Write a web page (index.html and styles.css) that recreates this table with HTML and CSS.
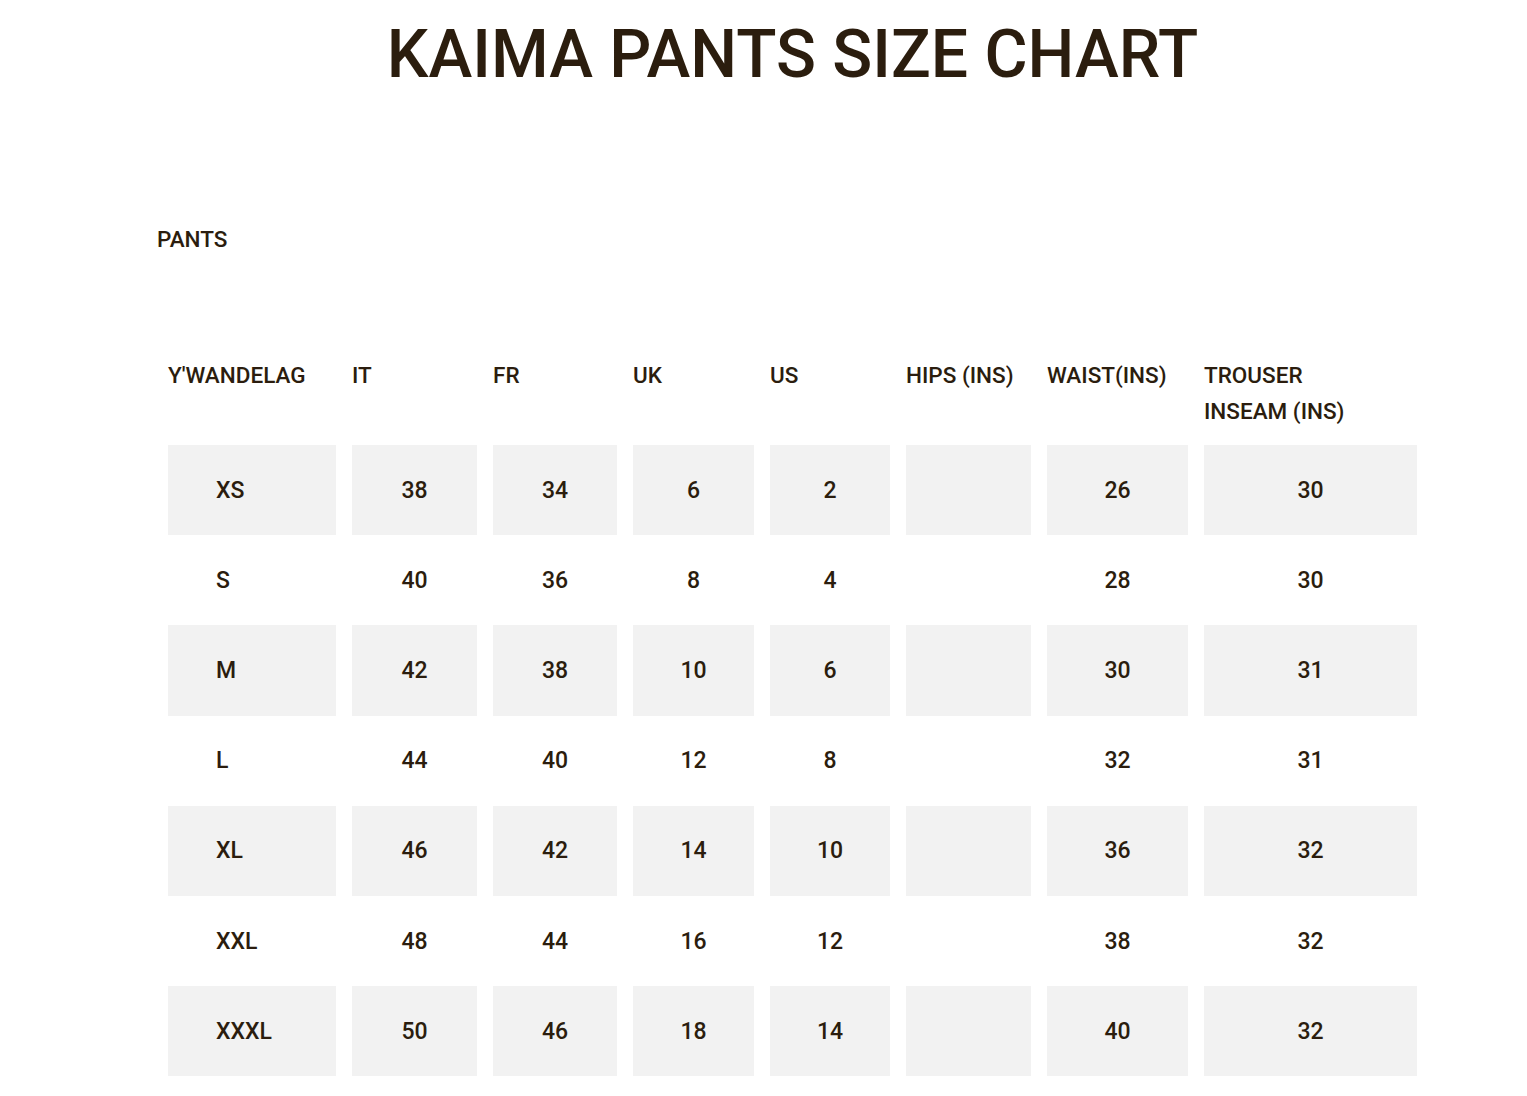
FILE: index.html
```html
<!DOCTYPE html>
<html>
<head>
<meta charset="utf-8">
<link rel="stylesheet" href="styles.css">
</head>
<body>
<main class="page">
  <h1 class="title">KAIMA PANTS SIZE CHART</h1>
  <h2 class="section">PANTS</h2>
  <table class="chart">
    <colgroup>
      <col class="c1"><col class="c2"><col class="c3"><col class="c4"><col class="c5"><col class="c6"><col class="c7"><col class="c8">
    </colgroup>
    <thead>
      <tr>
        <th>Y'WANDELAG</th><th>IT</th><th>FR</th><th>UK</th><th>US</th><th>HIPS (INS)</th><th>WAIST(INS)</th><th>TROUSER<br>INSEAM (INS)</th>
      </tr>
    </thead>
    <tbody>
      <tr class="shade"><td>XS</td><td>38</td><td>34</td><td>6</td><td>2</td><td></td><td>26</td><td>30</td></tr>
      <tr><td>S</td><td>40</td><td>36</td><td>8</td><td>4</td><td></td><td>28</td><td>30</td></tr>
      <tr class="shade"><td>M</td><td>42</td><td>38</td><td>10</td><td>6</td><td></td><td>30</td><td>31</td></tr>
      <tr><td>L</td><td>44</td><td>40</td><td>12</td><td>8</td><td></td><td>32</td><td>31</td></tr>
      <tr class="shade"><td>XL</td><td>46</td><td>42</td><td>14</td><td>10</td><td></td><td>36</td><td>32</td></tr>
      <tr><td>XXL</td><td>48</td><td>44</td><td>16</td><td>12</td><td></td><td>38</td><td>32</td></tr>
      <tr class="shade"><td>XXXL</td><td>50</td><td>46</td><td>18</td><td>14</td><td></td><td>40</td><td>32</td></tr>
    </tbody>
  </table>
</main>
</body>
</html>
```
FILE: styles.css
```css
html, body {
  margin: 0;
  padding: 0;
  background: #fff;
}
body {
  color: #2b1d0e;
  font-family: Roboto, "Liberation Sans", Arial, sans-serif;
}
.page {
  margin-left: 152px;
  width: 1281px;
}
.title {
  margin: 0;
  padding-top: 21px;
  text-align: center;
  font-family: Roboto, "Liberation Sans", sans-serif;
  font-weight: 500;
  font-size: 66px;
  line-height: 68px;
  letter-spacing: 0;
  color: #2b1d0e;
}
.section {
  margin: 138px 0 0 5px;
  font-family: Roboto, "Liberation Sans", Arial, sans-serif;
  font-weight: 500;
  font-size: 22.5px;
  line-height: 24px;
}
.chart {
  margin-top: 106px;
  border-collapse: separate;
  border-spacing: 16px 0;
  table-layout: fixed;
  width: 1281px;
}
.c1 { width: 168px; }
.c2 { width: 125px; }
.c3 { width: 124px; }
.c4 { width: 121px; }
.c5 { width: 120px; }
.c6 { width: 125px; }
.c7 { width: 141px; }
.c8 { width: 213px; }
.chart th {
  padding: 0 0 16px 0;
  text-align: left;
  vertical-align: top;
  font-family: Roboto, "Liberation Sans", Arial, sans-serif;
  font-weight: 500;
  font-size: 22.5px;
  line-height: 36px;
  white-space: nowrap;
}
.chart td {
  height: 90.2px;
  padding: 0;
  text-align: center;
  vertical-align: middle;
  font-family: Roboto, "Liberation Sans", sans-serif;
  font-weight: 500;
  font-size: 23px;
}
.chart td:first-child {
  text-align: left;
  padding-left: 48px;
}
.chart .shade td {
  background: #f2f2f2;
}
```
